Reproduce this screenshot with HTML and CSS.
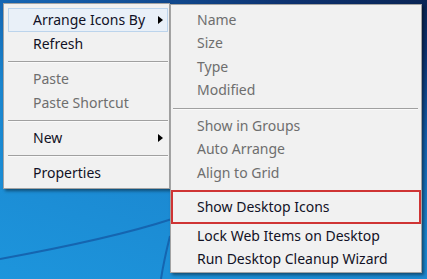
FILE: index.html
```html
<!DOCTYPE html>
<html>
<head>
<meta charset="utf-8">
<link rel="stylesheet" href="styles.css">
</head>
<body>
<div class="desktop">
  <svg class="wallpaper" width="427" height="279" viewBox="0 0 427 279">
    <path d="M0 259 C 60 248, 120 236, 172 219" stroke="#1565b0" stroke-width="2" fill="none"/>
    <path d="M170 236 C 166 252, 163 266, 161 279" stroke="#1565b0" stroke-width="2" fill="none"/>
  </svg>
  <div class="menu main">
    <div class="item hot"><span>Arrange Icons By</span><i class="arrow"></i></div>
    <div class="item"><span>Refresh</span></div>
    <div class="sep"></div>
    <div class="item off"><span>Paste</span></div>
    <div class="item off"><span>Paste Shortcut</span></div>
    <div class="sep"></div>
    <div class="item"><span>New</span><i class="arrow"></i></div>
    <div class="sep"></div>
    <div class="item"><span>Properties</span></div>
  </div>
  <div class="menu sub">
    <div class="sitem off">Name</div>
    <div class="sitem off">Size</div>
    <div class="sitem off">Type</div>
    <div class="sitem off">Modified</div>
    <div class="ssep"></div>
    <div class="sitem off">Show in Groups</div>
    <div class="sitem off">Auto Arrange</div>
    <div class="sitem off">Align to Grid</div>
    <div class="sitem marked">Show Desktop Icons</div>
    <div class="sitem">Lock Web Items on Desktop</div>
    <div class="sitem">Run Desktop Cleanup Wizard</div>
  </div>
</div>
</body>
</html>
```
FILE: styles.css
```css
html, body {
  margin: 0;
  padding: 0;
}
body {
  width: 427px;
  height: 279px;
  overflow: hidden;
  font-family: "Noto Sans", "Open Sans", sans-serif;
  font-size: 14px;
  color: #111126;
}
.desktop {
  position: relative;
  width: 427px;
  height: 279px;
  box-sizing: border-box;
  padding: 3px 0 0 3px;
  display: flex;
  align-items: flex-start;
  background: linear-gradient(200deg, #0a2555 0%, #0d3270 12%, #1560ad 32%, #1b86cf 55%, #1d95dc 100%);
}
.wallpaper {
  position: absolute;
  left: 0;
  top: 0;
}
.menu {
  position: relative;
  background: #f1f1f1;
  border: 1px solid #a3a3a3;
  box-shadow: 2px 2px 3px rgba(0, 0, 0, 0.45);
  box-sizing: border-box;
}
.main {
  width: 167px;
  padding: 4px 1px 3px 4px;
}
.item {
  height: 24px;
  box-sizing: border-box;
  display: flex;
  align-items: center;
  justify-content: space-between;
  padding: 0 4px 0 24px;
  border: 1px solid transparent;
  line-height: 1;
}
.item.hot {
  background: #e9f0f8;
  border-color: #bcd4ec;
}
.off {
  color: #6e6e6e;
}
.arrow {
  width: 0;
  height: 0;
  border-top: 4.5px solid transparent;
  border-bottom: 4.5px solid transparent;
  border-left: 5px solid #000;
}
.sep {
  height: 11px;
  box-sizing: border-box;
  padding-top: 5px;
}
.sep::before {
  content: "";
  display: block;
  height: 1px;
  background: #a0a0a0;
  border-bottom: 1px solid #fafafa;
}
.sub {
  width: 252px;
  margin-top: 1px;
  height: 269px;
  padding: 3px 0 0 0;
}
.sitem {
  height: 23.5px;
  box-sizing: border-box;
  display: flex;
  align-items: center;
  padding-left: 26px;
  line-height: 1;
}
.ssep {
  height: 12px;
  box-sizing: border-box;
  padding: 6px 3px 0 2px;
}
.ssep::before {
  content: "";
  display: block;
  height: 1px;
  background: #a0a0a0;
  border-bottom: 1px solid #fafafa;
}
.sitem.marked {
  margin-top: 5.5px;
  height: 34px;
  border: 2px solid #cf3434;
  padding-left: 24px;
}
```
